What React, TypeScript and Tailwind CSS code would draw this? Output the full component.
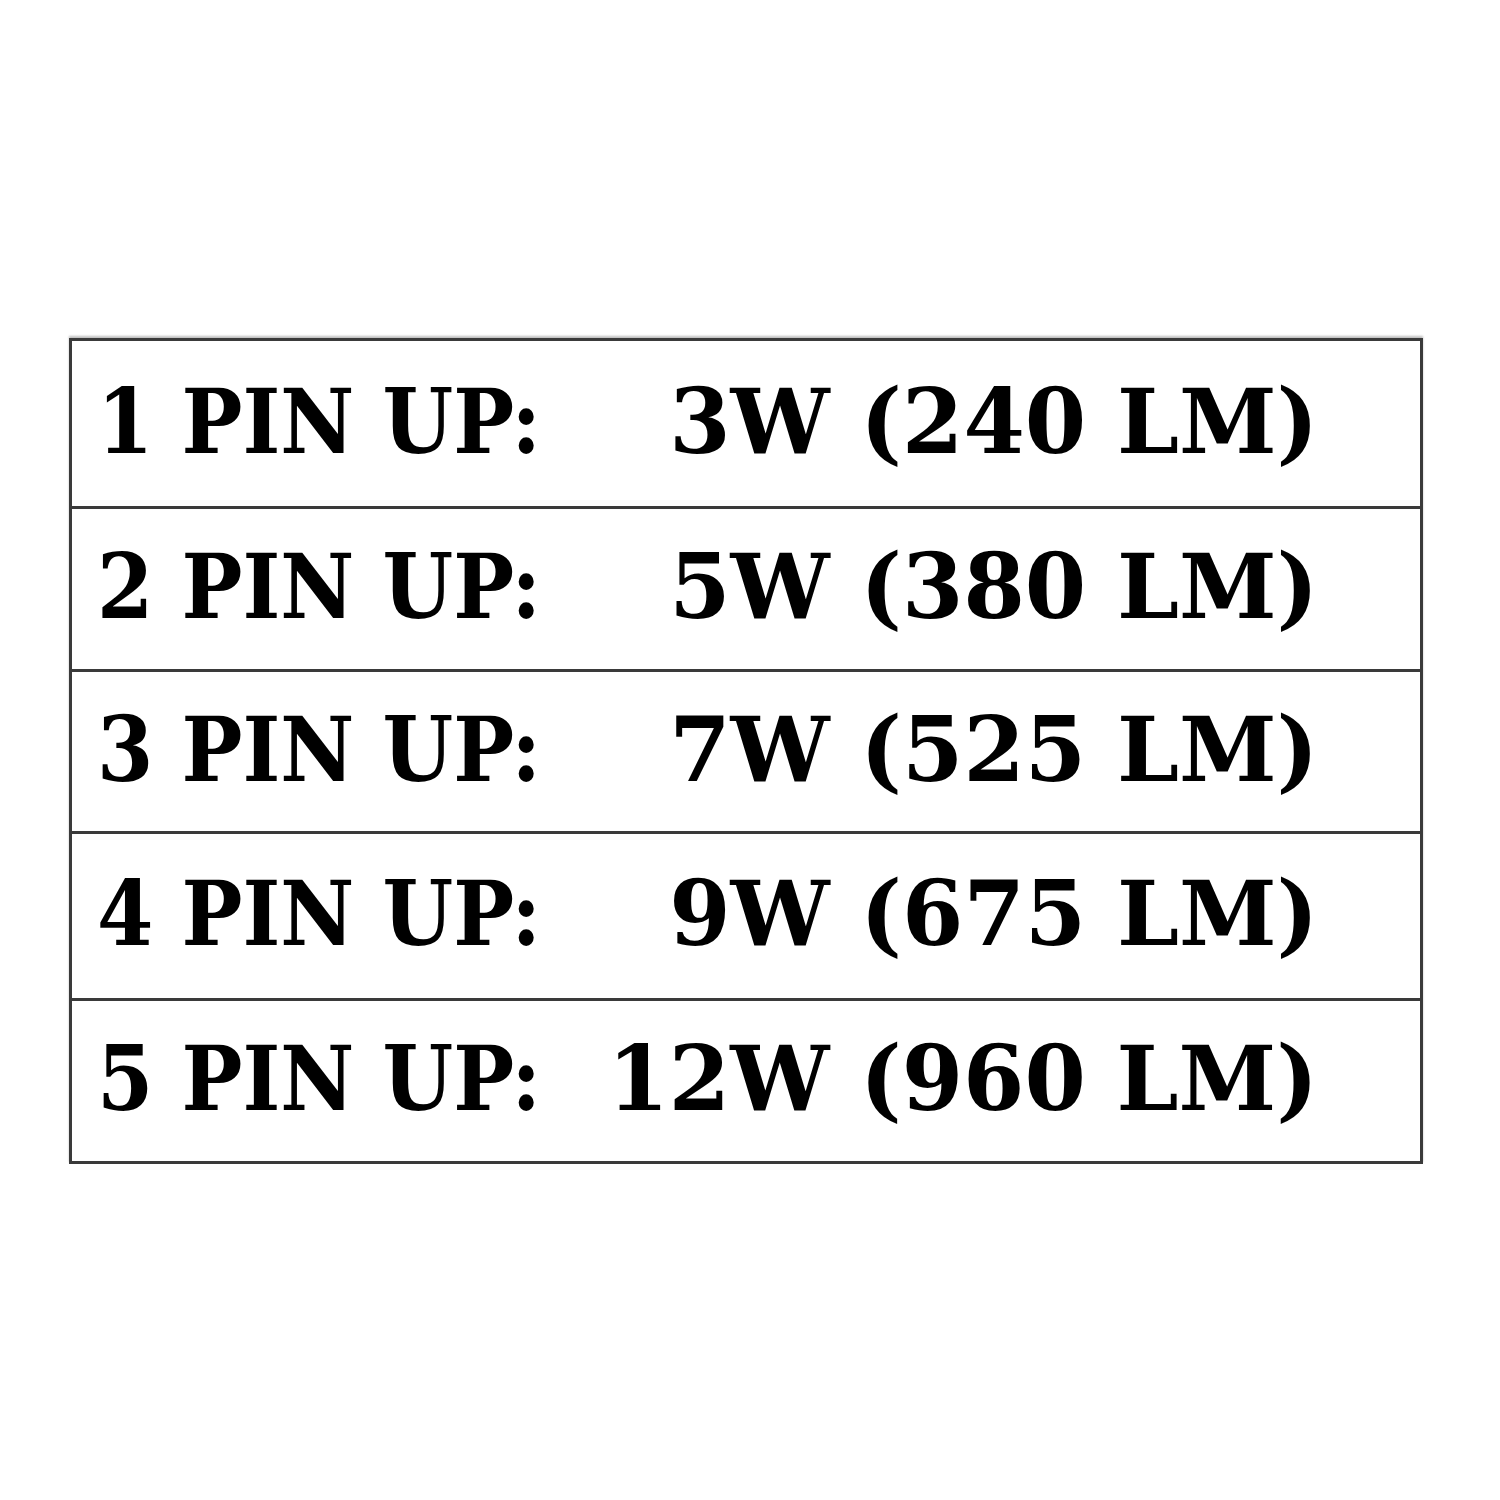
const rows = [
  { label: "1 PIN UP:", value: "3W (240 LM)", h: "h-[165px]" },
  { label: "2 PIN UP:", value: "5W (380 LM)", h: "h-[163px]" },
  { label: "3 PIN UP:", value: "7W (525 LM)", h: "h-[162px]" },
  { label: "4 PIN UP:", value: "9W (675 LM)", h: "h-[167px]" },
  { label: "5 PIN UP:", value: "12W (960 LM)", h: "h-[163px]" },
];

export default function App() {
  return (
    <div className="flex h-[1500px] w-[1500px] items-start bg-white pl-[69px] pt-[338px]">
      <div className="w-[1354px] border-[3px] border-[#3a3a3a] shadow-[0_-2px_2px_rgba(0,0,0,0.25)]">
        {rows.map((row, i) => (
          <div
            key={row.label}
            className={`flex items-center whitespace-nowrap pb-[6px] pl-[25px] pr-[102px] font-['DejaVu_Serif',serif] text-[90px] font-bold leading-none text-black ${row.h} ${
              i > 0 ? "border-t-[3px] border-[#3a3a3a]" : ""
            }`}
          >
            <span className="w-[500px] shrink-0 origin-left scale-x-[0.9]">{row.label}</span>
            <div className="flex min-w-0 flex-1 justify-end">
              <span className="shrink-0 origin-right scale-x-[0.98]">{row.value}</span>
            </div>
          </div>
        ))}
      </div>
    </div>
  );
}
